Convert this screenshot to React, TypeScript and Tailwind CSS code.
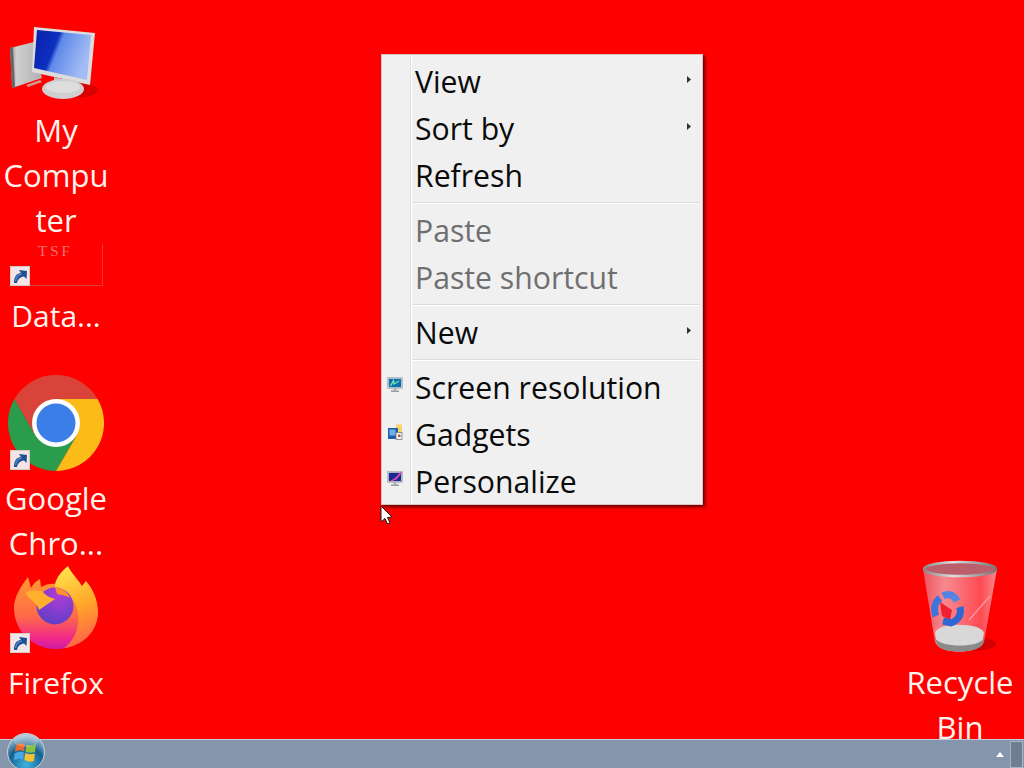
const font = "font-['Open_Sans','Noto_Sans',sans-serif]";

function ShortcutArrow() {
  return (
    <svg viewBox="0 0 20 20" className="h-[20px] w-[20px]">
      <rect x="0.5" y="0.5" width="19" height="19" fill="#f3e4e6" stroke="#d8c8cc" />
      <path d="M4 17 C4 10 7 7.5 11 7 L9 4 L17 5 L16.5 13 L14 10.5 C10 11 8 13 7 17Z" fill="#1d4f91" />
      <path d="M5.5 15 C6 11 8.5 8.5 12 8" stroke="#5f93cf" strokeWidth="1.2" fill="none" />
    </svg>
  );
}

function ComputerIcon() {
  return (
    <svg viewBox="0 0 100 76" className="h-[76px] w-[100px]">
      <defs>
        <linearGradient id="cs" x1="0" y1="0" x2="1" y2="0.35">
          <stop offset="0" stopColor="#0a1fa8" />
          <stop offset="0.42" stopColor="#0c30c0" />
          <stop offset="0.5" stopColor="#5f8aea" />
          <stop offset="1" stopColor="#a4bcf4" />
        </linearGradient>
        <linearGradient id="ct" x1="0" y1="0" x2="1" y2="0">
          <stop offset="0" stopColor="#8d8d8d" />
          <stop offset="0.2" stopColor="#d0d0d0" />
          <stop offset="1" stopColor="#b0b0b0" />
        </linearGradient>
      </defs>
      <ellipse cx="72" cy="65" rx="26" ry="8" fill="#b80000" opacity="0.5" />
      <path d="M10 23 L34 17 L42 53 L12 63Z" fill="url(#ct)" />
      <path d="M10 23 L13 22 L15 62 L12 63Z" fill="#666" />
      <path d="M26 60 L40 55 L42 57 L28 62Z" fill="#d09a90" />
      <path d="M34 2 L95 8 L90 60 L32 47Z" fill="#dcdcdc" />
      <path d="M37 5 L91 10 L87 55 L34 43Z" fill="url(#cs)" />
      <path d="M54 52 L76 57 L76 64 L54 62Z" fill="#bcbcbc" />
      <ellipse cx="63" cy="64" rx="21" ry="10" fill="#cfcfcf" />
      <ellipse cx="63" cy="62" rx="17" ry="6" fill="#dedede" />
    </svg>
  );
}

function DataThumb() {
  return (
    <div className="flex h-[42px] w-[94px] justify-center overflow-hidden border-b border-r border-[#e63a3a]">
      <span className="h-[14px] text-[15px] leading-[14px] tracking-[3px] text-[#ee7272] font-['Liberation_Serif',serif]">TSF</span>
    </div>
  );
}

function ChromeIcon() {
  return (
    <svg viewBox="0 0 96 96" className="h-[96px] w-[96px]">
      <path d="M89.6 24 A48 48 0 0 0 6.4 24 L27.2 60 L48 48 L48 24Z" fill="#d9433a" />
      <path d="M6.4 24 A48 48 0 0 0 48 96 L69 60 L27.2 60Z" fill="#2b9c4c" />
      <path d="M48 96 A48 48 0 0 0 89.6 24 L48 24 L69 60Z" fill="#fbbb18" />
      <circle cx="48" cy="48" r="24" fill="#fff" />
      <circle cx="48" cy="48" r="19.5" fill="#3b7ee8" />
    </svg>
  );
}

function FirefoxIcon() {
  return (
    <svg viewBox="0 0 84 84" className="h-[84px] w-[84px]">
      <defs>
        <linearGradient id="fb" x1="0.5" y1="0" x2="0.5" y2="1">
          <stop offset="0" stopColor="#ff9a2e" />
          <stop offset="0.55" stopColor="#ff6a4a" />
          <stop offset="0.85" stopColor="#f0288a" />
          <stop offset="1" stopColor="#cc1ca8" />
        </linearGradient>
        <linearGradient id="ft" x1="0.4" y1="0" x2="0.6" y2="1">
          <stop offset="0" stopColor="#ffe24a" />
          <stop offset="0.5" stopColor="#ffa52a" />
          <stop offset="1" stopColor="#ff5f4a" />
        </linearGradient>
        <radialGradient id="fg" cx="0.6" cy="0.2" r="0.9">
          <stop offset="0" stopColor="#b03cd8" />
          <stop offset="1" stopColor="#5a3fc4" />
        </radialGradient>
      </defs>
      <path d="M0 42 C0 33 4 24 14 11 L17 22 C19 18 22 15 26 13 L27 21 C32 18 38 17 44 18 L84 44 C84 66 66 83 42 83 C18 83 0 64 0 42Z" fill="url(#fb)" />
      <path d="M41 22 C40 13 48 5 54 0 C57 7 64 13 68 20 L72 15 C79 23 84 34 84 46 C84 66 68 80 50 82 C62 74 68 56 62 40 C58 30 50 24 41 22Z" fill="url(#ft)" />
      <circle cx="41" cy="40" r="18.5" fill="url(#fg)" />
      <path d="M11 27 C17 24 24 24 29 26 C33 31 38 32 41 33 L25 44 C24 38 17 35 11 27Z" fill="#ffb02c" />
      <path d="M41 21 C47 22 53 25 56 32 C51 29 47 29 43 28Z" fill="#ff8f2c" />
    </svg>
  );
}

function RecycleIcon() {
  return (
    <svg viewBox="0 0 76 94" className="h-[94px] w-[76px]">
      <defs>
        <linearGradient id="rb" x1="0" y1="0" x2="1" y2="0">
          <stop offset="0" stopColor="#ee5560" />
          <stop offset="0.3" stopColor="#f78a90" />
          <stop offset="0.78" stopColor="#ff4a52" />
          <stop offset="1" stopColor="#f48a8e" />
        </linearGradient>
        <linearGradient id="rm" x1="0" y1="0" x2="1" y2="0">
          <stop offset="0" stopColor="#8a8a8a" />
          <stop offset="0.4" stopColor="#e0e0e0" />
          <stop offset="1" stopColor="#777" />
        </linearGradient>
      </defs>
      <ellipse cx="50" cy="84" rx="24" ry="7" fill="#b80000" opacity="0.6" />
      <path d="M1 9 L13 82 C17 94 57 94 62 82 L75 9Z" fill="url(#rb)" />
      <ellipse cx="38" cy="9" rx="36" ry="7" fill="#bb5f6c" stroke="url(#rm)" strokeWidth="2.5" />
      <path d="M47 60 L68 36" stroke="#ff9a9a" strokeWidth="1.2" />
      <path d="M13 73 C14 62 60 62 62 73 L60 84 C56 94 18 94 15 84Z" fill="#d8d8d8" />
      <path d="M13 78 C18 88 58 88 62 78 L61 84 C56 94 18 94 15 84Z" fill="#8b8b8b" />
      <path d="M18 42 L30 50 L28 60 L20 56Z" fill="#ef2030" />
      <path d="M14 56 C11 49 13 42 18 38" stroke="#3f74dc" strokeWidth="7" fill="none" />
      <path d="M21 36 C27 33 32 35 35 41" stroke="#5585e4" strokeWidth="7" fill="none" />
      <path d="M38 47 C40 54 36 61 29 63 L21 61" stroke="#2f66d4" strokeWidth="7" fill="none" />
    </svg>
  );
}

function Label({ lines, className }: { lines: string[]; className: string }) {
  return (
    <div className={`w-[112px] text-center leading-[45px] text-[#fff3ee] ${className}`}>
      {lines.map((l) => (
        <div key={l} className="whitespace-nowrap">{l}</div>
      ))}
    </div>
  );
}

function ScreenIcon({ kind }: { kind: "screen" | "gadgets" | "personalize" }) {
  if (kind === "gadgets") {
    return (
      <svg viewBox="0 0 16 16" className="h-[16px] w-[16px]">
        <rect x="9" y="0.5" width="6" height="8" fill="#f6d56a" />
        <rect x="1" y="4" width="10" height="11" fill="#1f5fa8" />
        <rect x="2.5" y="5.5" width="6" height="6" fill="#6fb0e8" />
        <rect x="9" y="8.5" width="6" height="7" fill="#f4f4f4" stroke="#7a7a7a" strokeWidth="0.8" />
        <rect x="11" y="10.5" width="2.5" height="2.5" fill="#c05040" />
      </svg>
    );
  }
  return (
    <svg viewBox="0 0 16 16" className="h-[16px] w-[16px]">
      <rect x="0.5" y="0.5" width="15" height="11" fill="#ccd4d8" stroke="#a0a8ae" strokeWidth="0.6" />
      <rect x="1.8" y="1.8" width="12.4" height="8.4" fill={kind === "screen" ? "#0f6fb0" : "#1a2a90"} />
      {kind === "screen" ? (
        <path d="M3.5 9 L6.5 3.5 L7 7 L12 4" stroke="#80e8a0" strokeWidth="1.3" fill="none" />
      ) : (
        <path d="M3 10 L8 7 L14 0.5 L15 1.5 L10 8 L6 10Z" fill="#e04ab0" />
      )}
      <rect x="6.5" y="11.5" width="3" height="2" fill="#b0b0b0" />
      <rect x="4" y="13.5" width="8" height="1.4" fill="#8e9498" />
    </svg>
  );
}

function Row({ label, disabled, arrow, icon }: { label: string; disabled?: boolean; arrow?: boolean; icon?: "screen" | "gadgets" | "personalize" }) {
  return (
    <div className="flex h-[47px] items-center">
      <div className="flex w-[29px] shrink-0 justify-center pr-[3px] pb-[6px]">
        {icon && <ScreenIcon kind={icon} />}
      </div>
      <div className={`flex-1 pl-[4px] text-[30.2px] leading-[47px] ${disabled ? "text-[#6f6f6f]" : "text-[#0a0a0a]"}`}>{label}</div>
      {arrow && (
        <svg viewBox="0 0 4 7" className="mr-[11px] mb-[5px] h-[7px] w-[4px]">
          <path d="M0 0 L4 3.5 L0 7Z" fill="#303030" />
        </svg>
      )}
    </div>
  );
}

function Sep() {
  return (
    <div className="flex h-[8px] items-center pl-[30px] pr-[2px]">
      <div className="h-[2px] flex-1 border-b border-white bg-[#dcdcdc]" />
    </div>
  );
}

export default function App() {
  return (
    <div className={`relative flex h-[768px] w-[1024px] flex-col overflow-hidden bg-[#ff0000] ${font}`}>
      <div className="relative flex-1 overflow-hidden">
        <div className="absolute left-0 top-[25px] flex flex-col">
          <ComputerIcon />
          <Label lines={["My", "Compu", "ter"]} className="mt-[7px] text-[31px]" />
        </div>

        <div className="absolute left-0 top-[244px] flex flex-col">
          <div className="relative ml-[9px] h-[42px] w-[94px]">
            <DataThumb />
            <div className="absolute bottom-0 left-[1px]"><ShortcutArrow /></div>
          </div>
          <Label lines={["Data..."]} className="mt-[7px] text-[30px]" />
        </div>

        <div className="absolute left-0 top-[375px] flex flex-col">
          <div className="relative ml-[8px] h-[96px] w-[96px]">
            <ChromeIcon />
            <div className="absolute bottom-[1px] left-[2px]"><ShortcutArrow /></div>
          </div>
          <Label lines={["Google", "Chro..."]} className="mt-[5px] text-[31px]" />
        </div>

        <div className="absolute left-0 top-[566px] flex flex-col">
          <div className="relative ml-[14px] h-[84px] w-[84px]">
            <FirefoxIcon />
            <div className="absolute bottom-[-3px] left-[-4px]"><ShortcutArrow /></div>
          </div>
          <Label lines={["Firefox"]} className="mt-[10px] text-[30px]" />
        </div>

        <div className="absolute left-[904px] top-[560px] flex flex-col">
          <div className="ml-[18px]"><RecycleIcon /></div>
          <Label lines={["Recycle", "Bin"]} className="mt-[6px] text-[31px]" />
        </div>

        <div className="absolute left-[381px] top-[54px] h-[451px] w-[322px] overflow-hidden border border-[#d8c4c4] bg-[#f0f0f0] pt-[3px] shadow-[2px_2px_3px_rgba(70,0,0,0.85)]">
          <div className="absolute bottom-0 left-[28px] top-0 w-[2px] border-r border-white bg-[#e2e2e2]" />
          <div className="relative">
            <Row label="View" arrow />
            <Row label="Sort by" arrow />
            <Row label="Refresh" />
            <Sep />
            <Row label="Paste" disabled />
            <Row label="Paste shortcut" disabled />
            <Sep />
            <Row label="New" arrow />
            <Sep />
            <Row label="Screen resolution" icon="screen" />
            <Row label="Gadgets" icon="gadgets" />
            <Row label="Personalize" icon="personalize" />
          </div>
        </div>

        <svg viewBox="0 0 12 20" className="absolute left-[380px] top-[505px] h-[20px] w-[12px]">
          <path d="M1 1 L1 17 L5 13.5 L7.5 19 L10 18 L7.5 12.5 L12 12Z" fill="#fff" stroke="#1a1a1a" strokeWidth="1" />
        </svg>
      </div>

      <div className="flex h-[29px] items-center justify-end gap-[6px] border-t border-[#c2ccd8] bg-[#8596ac]">
        <svg viewBox="0 0 8 5" className="h-[5px] w-[8px]">
          <path d="M0 5 L4 0 L8 5Z" fill="#fff" />
        </svg>
        <div className="mr-[1px] h-[27px] w-[13px] border border-[#aab4c0] bg-[#6f7f92]" />
      </div>

      <svg viewBox="0 0 40 40" className="absolute left-[6px] top-[732px] h-[40px] w-[40px]">
        <defs>
          <radialGradient id="orb" cx="0.5" cy="0.85" r="0.8">
            <stop offset="0" stopColor="#3fb4e0" />
            <stop offset="0.6" stopColor="#15608f" />
            <stop offset="1" stopColor="#a8c4d6" />
          </radialGradient>
        </defs>
        <circle cx="20" cy="20" r="18.5" fill="url(#orb)" stroke="#c8d4dc" strokeWidth="1" />
        <path d="M10 13 C13 11 16 11 19 12 L18 19 C15 18 12 18 9 20Z" fill="#e8682c" />
        <path d="M20.5 12.5 C24 14 27 14 30 12 L29 20 C26 21 23 21 19.5 19.5Z" fill="#8cc03e" />
        <path d="M8.7 21.5 C12 19.5 15 19.5 17.8 20.5 L17 27.5 C14 26.5 11 26.5 8 28.5Z" fill="#4aa8e8" />
        <path d="M19.3 21 C23 22.5 26 22.5 28.8 21.5 L28 29 C25 30 22 30 18.3 28Z" fill="#f4c232" />
        <ellipse cx="20" cy="9" rx="12" ry="6" fill="#fff" opacity="0.22" />
      </svg>
    </div>
  );
}
